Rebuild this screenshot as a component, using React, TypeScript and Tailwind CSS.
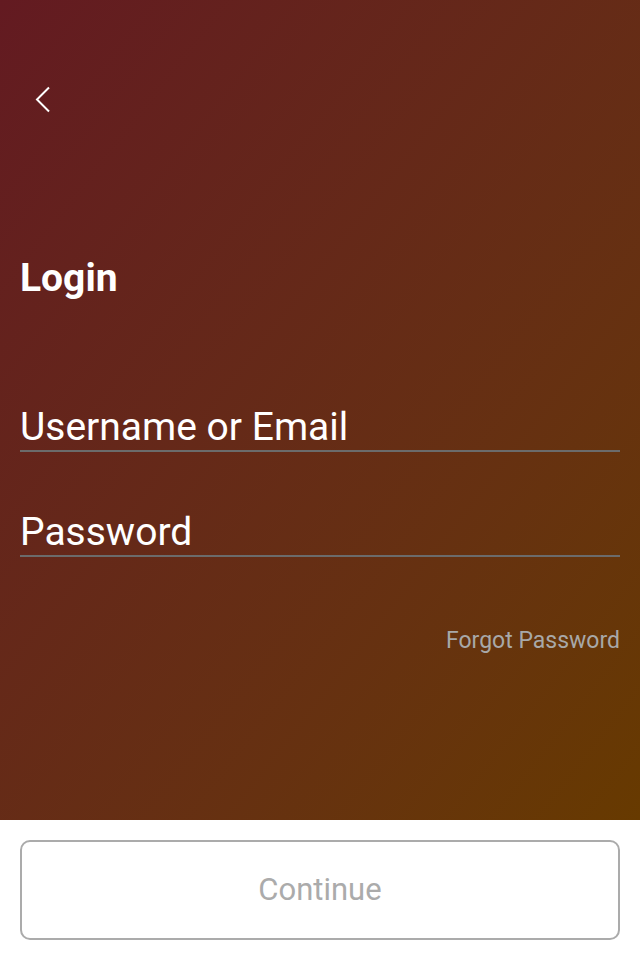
export default function App() {
  return (
    <div
      className="flex h-[960px] w-[640px] flex-col bg-white"
      style={{ fontFamily: "Roboto, 'Liberation Sans', sans-serif" }}
    >
      <div className="flex h-[820px] flex-col bg-gradient-to-br from-[#631a21] to-[#673a00] px-5">
        <button className="mt-[86px] ml-[14px] h-[27px] w-[18px] text-white">
          <svg width="18" height="27" viewBox="0 0 18 27" fill="none">
            <path d="M15 1.5 L3 13.5 L15 25.5" stroke="currentColor" strokeWidth="2" />
          </svg>
        </button>

        <h1 className="mt-[146px] text-[39px] font-bold leading-none text-white">Login</h1>

        <div className="mt-[106px] border-b-2 border-[#6b6b6b]">
          <input
            placeholder="Username or Email"
            className="w-full bg-transparent text-[39px] leading-[46px] text-white outline-none placeholder:text-white"
          />
        </div>

        <div className="mt-[57px] border-b-2 border-[#6b6b6b]">
          <input
            type="password"
            placeholder="Password"
            className="w-full bg-transparent text-[39px] leading-[46px] text-white outline-none placeholder:text-white"
          />
        </div>

        <div className="mt-[67px] text-right text-[23px] text-[#a8a8a8]">Forgot Password</div>
      </div>

      <div className="px-5 pt-5">
        <button className="h-[100px] w-full rounded-[10px] border-2 border-[#ababab] text-[31px] text-[#ababab]">
          Continue
        </button>
      </div>
    </div>
  );
}
